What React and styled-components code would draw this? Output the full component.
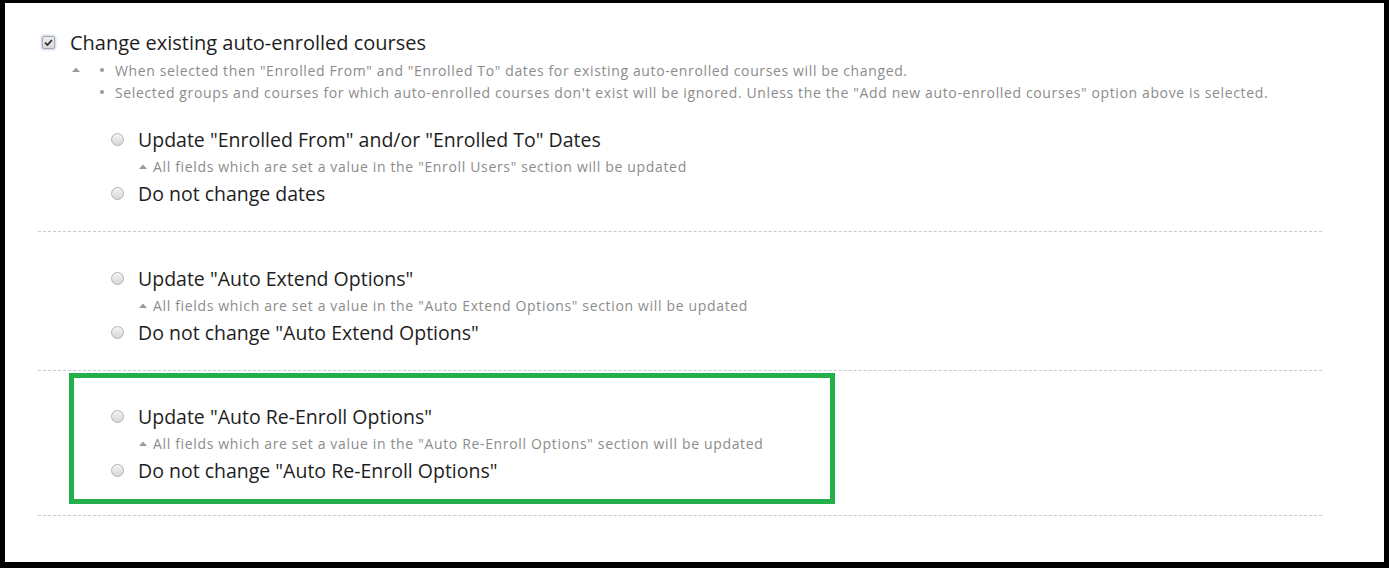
import React from 'react'
import styled, { createGlobalStyle } from 'styled-components'

const GlobalStyle = createGlobalStyle`
  html, body {
    margin: 0;
    padding: 0;
    background: #000;
  }
  body {
    font-family: "Open Sans", "Noto Sans", sans-serif;
  }
`

const groups = [
  {
    update: 'Update "Enrolled From" and/or "Enrolled To" Dates',
    hint: 'All fields which are set a value in the "Enroll Users" section will be updated',
    keep: 'Do not change dates',
  },
  {
    update: 'Update "Auto Extend Options"',
    hint: 'All fields which are set a value in the "Auto Extend Options" section will be updated',
    keep: 'Do not change "Auto Extend Options"',
  },
  {
    update: 'Update "Auto Re-Enroll Options"',
    hint: 'All fields which are set a value in the "Auto Re-Enroll Options" section will be updated',
    keep: 'Do not change "Auto Re-Enroll Options"',
    highlight: true,
  },
]

function Caret() {
  return (
    <CaretIcon viewBox="0 0 8 5">
      <path d="M0 5 L4 0.5 L8 5 Z" fill="#9a9a9a" />
    </CaretIcon>
  )
}

function OptionGroup({ group, first, boxed }) {
  return (
    <Group $first={first} $boxed={boxed}>
      <RadioRow>
        <Radio />
        <Label>{group.update}</Label>
      </RadioRow>
      <HintRow>
        <Caret />
        <span>{group.hint}</span>
      </HintRow>
      <RadioRow>
        <Radio />
        <Label>{group.keep}</Label>
      </RadioRow>
    </Group>
  )
}

function App() {
  return (
    <>
      <GlobalStyle />
      <Frame>
        <Content>
          <CheckRow>
            <Checkbox>
              <svg viewBox="0 0 10 10" width="9" height="9">
                <path d="M1.2 5.2 L3.8 7.8 L8.8 2.2" stroke="#2b2b2b" strokeWidth="2" fill="none" />
              </svg>
            </Checkbox>
            <Heading>Change existing auto-enrolled courses</Heading>
          </CheckRow>
          <Notes>
            <Caret />
            <NoteList>
              <li><Dot />When selected then "Enrolled From" and "Enrolled To" dates for existing auto-enrolled courses will be changed.</li>
              <li><Dot />Selected groups and courses for which auto-enrolled courses don't exist will be ignored. Unless the the "Add new auto-enrolled courses" option above is selected.</li>
            </NoteList>
          </Notes>

          {groups.map((g, i) => (
            <React.Fragment key={i}>
              {g.highlight ? (
                <Highlight>
                  <OptionGroup group={g} boxed />
                </Highlight>
              ) : (
                <OptionGroup group={g} first={i === 0} />
              )}
              <Divider />
            </React.Fragment>
          ))}
        </Content>
      </Frame>
    </>
  )
}

const Frame = styled.div`
  box-sizing: border-box;
  height: 568px;
  border-style: solid;
  border-color: #000;
  border-width: 3px 5px 6px 5px;
  background: #fff;
  overflow: hidden;
`

const Content = styled.div`
  width: 1284px;
  margin-left: 33px;
  padding-top: 25px;
`

const CheckRow = styled.div`
  display: flex;
  align-items: center;
  height: 28px;
  padding-left: 4px;
  gap: 15px;
`

const Checkbox = styled.span`
  box-sizing: border-box;
  width: 13px;
  height: 13px;
  border: 1px solid #a9a9a9;
  border-radius: 2px;
  background: linear-gradient(#ececec, #d9d9d9);
  box-shadow: 0 0 2px 1px rgba(120, 160, 220, 0.45);
  display: flex;
  align-items: center;
  justify-content: center;
`

const Heading = styled.span`
  font-size: 20px;
  color: #1e1e1e;
`

const Notes = styled.div`
  display: flex;
  align-items: flex-start;
  margin-top: 3px;
  padding-left: 34px;
  gap: 20px;
  color: #8c8c8c;
  font-size: 14px;
  letter-spacing: 0.63px;

  svg {
    margin-top: 8px;
  }
`

const NoteList = styled.ul`
  list-style: none;
  margin: 0;
  padding: 0;

  li {
    display: flex;
    align-items: center;
    height: 22px;
    gap: 11px;
    white-space: nowrap;
  }
`

const Dot = styled.span`
  width: 4px;
  height: 4px;
  border-radius: 50%;
  background: #9a9a9a;
  flex: none;
`

const CaretIcon = styled.svg`
  width: 8px;
  height: 5px;
  flex: none;
`

const Group = styled.div`
  padding-left: ${(p) => (p.$boxed ? '37px' : '73px')};
  padding-top: ${(p) => (p.$first ? '22px' : p.$boxed ? '24px' : '32px')};
  padding-bottom: ${(p) => (p.$boxed ? '15px' : '24px')};
`

const RadioRow = styled.div`
  display: flex;
  align-items: center;
  height: 28px;
  gap: 14px;
`

const Radio = styled.span`
  box-sizing: border-box;
  width: 13px;
  height: 13px;
  border-radius: 50%;
  border: 1px solid #b3b3b3;
  background: linear-gradient(#f4f4f4, #d6d6d6);
  flex: none;
`

const Label = styled.span`
  font-size: 19.5px;
  color: #1e1e1e;
`

const HintRow = styled.div`
  display: flex;
  align-items: center;
  height: 26px;
  padding-left: 28px;
  gap: 6px;
  font-size: 14px;
  letter-spacing: 0.66px;
  color: #8c8c8c;
  white-space: nowrap;
`

const Highlight = styled.div`
  box-sizing: border-box;
  width: 766px;
  margin: 2px 0 11px 31px;
  border: 5px solid #23b04b;
`

const Divider = styled.hr`
  margin: 0;
  border: 0;
  border-top: 1px dashed #c8c8c8;
`

export default App
